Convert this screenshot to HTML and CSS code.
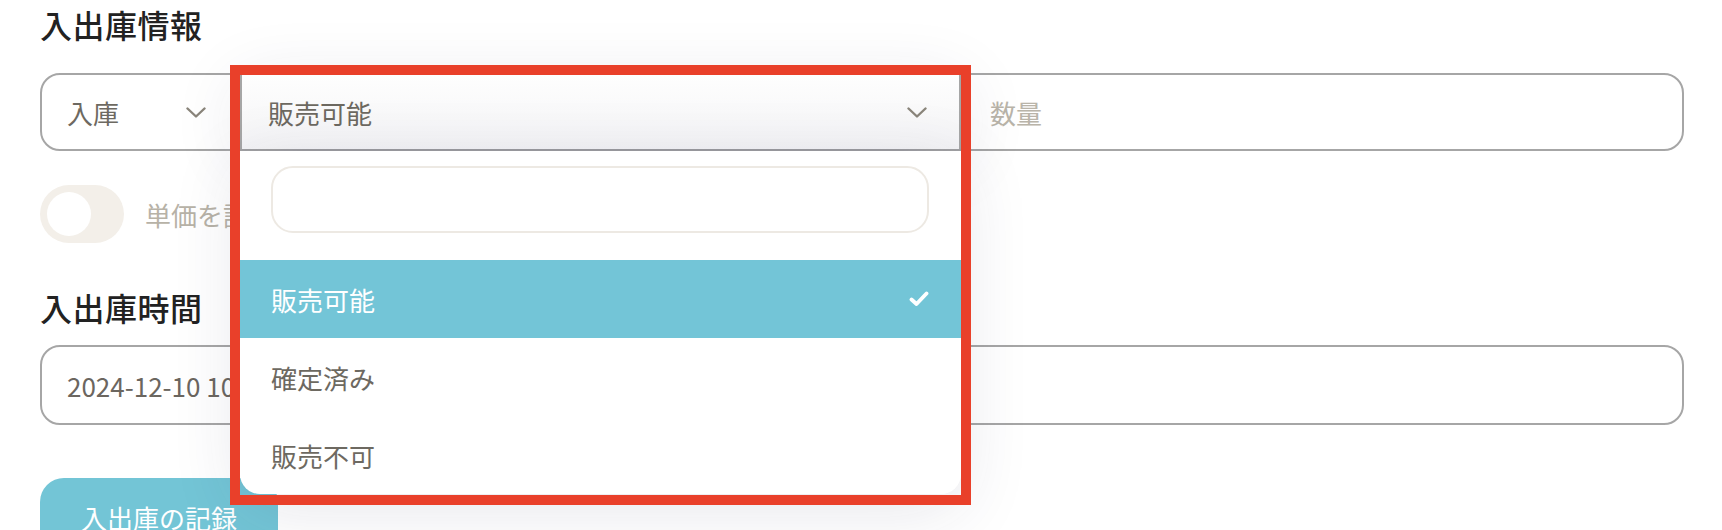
FILE: index.html
```html
<!DOCTYPE html>
<html lang="ja">
<head>
<meta charset="utf-8">
<link rel="stylesheet" href="styles.css">
</head>
<body>
<div class="page">
  <h2 class="title">入出庫情報</h2>
  <div class="group">
    <div class="seg seg-kind">
      <span>入庫</span>
      <svg class="chev" width="20" height="11" viewBox="0 0 20 11"><polyline points="1.5,1.5 10,9.5 18.5,1.5" fill="none" stroke="#8a857b" stroke-width="2.4" stroke-linecap="round" stroke-linejoin="round"/></svg>
    </div>
    <div class="seg seg-open">
      <span>販売可能</span>
      <svg class="chev" width="20" height="11" viewBox="0 0 20 11"><polyline points="1.5,1.5 10,9.5 18.5,1.5" fill="none" stroke="#8a857b" stroke-width="2.4" stroke-linecap="round" stroke-linejoin="round"/></svg>
      <div class="menu">
        <div class="search"></div>
        <div class="option selected">
          <span>販売可能</span>
          <svg width="20" height="16" viewBox="0 0 20 16"><polyline points="2.5,8.5 7.5,13 17.5,2.5" fill="none" stroke="#fff" stroke-width="3.8" stroke-linecap="round" stroke-linejoin="round"/></svg>
        </div>
        <div class="option">確定済み</div>
        <div class="option">販売不可</div>
      </div>
      <div class="annot"></div>
    </div>
    <div class="seg seg-qty">数量</div>
  </div>

  <div class="toggle-row">
    <div class="toggle"><div class="knob"></div></div>
    <span class="toggle-label">単価を記録する</span>
  </div>

  <h2 class="title title-2">入出庫時間</h2>
  <div class="date-input">2024-12-10 10:00</div>

  <button class="submit">入出庫の記録</button>
</div>
</body>
</html>
```

FILE: styles.css
```css
html, body {
  margin: 0;
  padding: 0;
  background: #ffffff;
  overflow: hidden;
}
body {
  font-family: "Noto Sans CJK JP", "Noto Sans", sans-serif;
  color: #6d6961;
}
.page {
  padding: 0 38px 0 40px;
}
.title {
  margin: 0;
  font-size: 32px;
  line-height: 48px;
  font-weight: 500;
  color: #222222;
  letter-spacing: 0.5px;
}
.group {
  margin-top: 25px;
  display: flex;
  height: 78px;
  box-sizing: border-box;
  border: 2px solid #a6a6a6;
  border-radius: 20px;
  background: #ffffff;
}
.seg {
  display: flex;
  align-items: center;
  font-size: 26px;
  box-sizing: border-box;
}
.seg-kind {
  width: 198px;
  padding: 0 34px 0 25px;
  justify-content: space-between;
  border-radius: 18px 0 0 18px;
}
.seg-open {
  position: relative;
  z-index: 5;
  width: 721px;
  padding: 0 32px 0 26px;
  justify-content: space-between;
  border-left: 2px solid #a6a6a6;
  border-right: 2px solid #a6a6a6;
  background: linear-gradient(#fefefe, #f4f4f6);
  box-shadow: 0 10px 70px rgba(40, 40, 80, 0.12);
}
.menu {
  position: absolute;
  top: calc(100% + 2px);
  left: -2px;
  right: -2px;
  padding-top: 15px;
  background: #ffffff;
  border-radius: 0 0 20px 20px;
  box-shadow: 0 14px 70px rgba(40, 40, 80, 0.12);
}
.search {
  margin: 0 32px 27px 31px;
  height: 67px;
  box-sizing: border-box;
  border: 2px solid #ede9e3;
  border-radius: 22px;
}
.option {
  display: flex;
  align-items: center;
  justify-content: space-between;
  height: 78px;
  padding: 0 32px 0 31px;
  font-size: 26px;
  color: #6d6961;
}
.option.selected {
  background: #73c5d7;
  color: #ffffff;
}
.annot {
  position: absolute;
  left: -12px;
  top: -10px;
  width: 741px;
  height: 440px;
  box-sizing: border-box;
  border: 10px solid #e9402a;
  z-index: 10;
  pointer-events: none;
}
.seg-qty {
  flex: 1;
  padding-left: 29px;
  color: #b9b4a9;
  border-radius: 0 18px 18px 0;
}
.toggle-row {
  margin-top: 34px;
  display: flex;
  align-items: center;
}
.toggle {
  width: 84px;
  height: 58px;
  border-radius: 29px;
  background: #f3efe9;
  display: flex;
  align-items: center;
  padding-left: 7px;
  box-sizing: border-box;
}
.knob {
  width: 44px;
  height: 44px;
  border-radius: 50%;
  background: #ffffff;
}
.toggle-label {
  margin-left: 21px;
  font-size: 26px;
  color: #b7b2a7;
}
.title-2 {
  margin-top: 40px;
}
.date-input {
  margin-top: 14px;
  height: 80px;
  box-sizing: border-box;
  border: 2px solid #a6a6a6;
  border-radius: 20px;
  display: flex;
  align-items: center;
  padding-left: 25px;
  font-size: 26px;
  color: #6b665f;
}
.submit {
  margin-top: 53px;
  height: 78px;
  width: 238px;
  border: none;
  border-radius: 24px;
  background: #73c5d6;
  color: #ffffff;
  font-family: "Noto Sans CJK JP", "Noto Sans", sans-serif;
  font-size: 26px;
  padding: 0;
  display: block;
}
```
